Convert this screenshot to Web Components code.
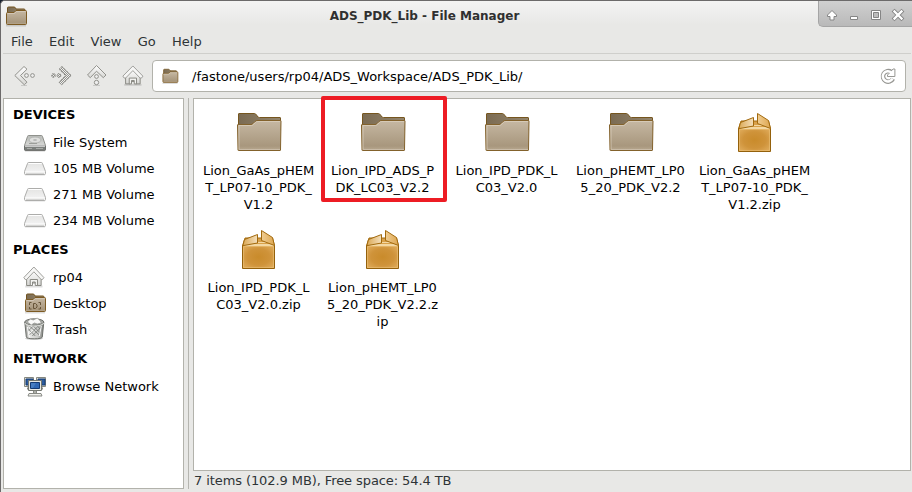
<!DOCTYPE html>
<html lang="en"><head><meta charset="utf-8"><title>ADS_PDK_Lib - File Manager</title>
<style>html,body{margin:0;width:912px;height:492px;overflow:hidden;background:#16202f}</style></head>
<body><file-manager></file-manager>
<script>
const folderDefs = `<defs><linearGradient id="f" x2="0" y2="1"><stop stop-color="#c6b8a3"/><stop offset=".85" stop-color="#a8977d"/><stop offset="1" stop-color="#b9aa92"/></linearGradient><linearGradient id="b" x2="1" y2="0"><stop stop-color="#7b6b52"/><stop offset="1" stop-color="#94856c"/></linearGradient></defs>`;
const smallFolder = extra => `<svg width="24" height="24" viewBox="0 0 24 24">${folderDefs}<path d="M2 21.5h20" stroke="#0002" stroke-width="2"/><path d="M3.5 10V4q0-1 1-1h5.500q1 0 1.500 1l.5 1h8q1 0 1 1v6h-17.500z" fill="url(#b)" stroke="#72531f"/><path d="M2.500 9.500q0-1 1-1h6.500l2-2h9.500q1 0 1 1v12q0 1-1 1h-18q-1 0-1-1z" fill="url(#f)" stroke="#7d5b23"/><path d="M3.500 10q0-.5.5-.5h6.500l2-2h9" fill="none" stroke="#d9cfc0" stroke-opacity=".7"/>${extra||''}</svg>`;
const volume = (a,b) => `<svg width="24" height="24" viewBox="0 0 24 24"><defs><linearGradient id="g" x2="0" y2="1"><stop stop-color="${a}"/><stop offset="1" stop-color="${b}"/></linearGradient></defs>`;
const houseShape = `<path d="M3 21.500h19" stroke="#0002" stroke-width="2"/><path d="M4.500 12v8.500h5v-4.500h1.500v2h3v-2h1.500v4.500h5V12L12.500 5z" fill="url(#h)" stroke="#85857f"/><path d="M8.500 20.500v-6h8v6h-2.500v-3.500h-3v3.500z" fill="#f3f3f1" stroke="#85857f"/><path d="M1.500 12.500L12.500 2l11 10.500-1.500 2h-1.500l-8-7.700-8 7.700H3z" fill="#f6f6f5" stroke="#9b9b97"/>`;
const grey = `<defs><linearGradient id="h" x2="0" y2="1"><stop stop-color="#fff"/><stop offset="1" stop-color="#d5d5d2"/></linearGradient></defs>`;
const icons = {
 app: smallFolder(),
 place: `<svg width="18" height="18" viewBox="0 0 24 24">${smallFolder().replace(/^<svg[^>]*>|<\/svg>$/g,'')}</svg>`,
 desktop: smallFolder('<path d="M6.500 14v-2.500h2M15.500 11.500h2v2.500M6.500 16v2h2M15.500 18h2v-2" fill="none" stroke="#675438"/><path d="M10.500 12.500h2l1.500 1.500v2l-1.500 1.500h-2z" fill="none" stroke="#675438"/>'),
 folder: `<svg width="48" height="48" viewBox="0 0 48 48">${folderDefs}<defs><filter id="s"><feGaussianBlur stdDeviation="1"/></filter></defs><path d="M3 43.200h43" stroke="#0008" stroke-width="2" filter="url(#s)"/><path d="M3.500 22V6q0-.5.5-.5h15.500q1 0 2 1.500l1.500 2q.7.500 1.500.500H45q.5 0 .5.500v12z" fill="url(#b)" stroke="#76561f"/><path d="M2.500 17q0-.5.5-.5h13q1 0 2-1l2-2q1-1 2-1H45.500q.5 0 .5.500L45.500 42q0 .5-.5.500H3.500q-.5 0-.5-.500z" fill="url(#f)" stroke="#83622c"/><path d="M4 41.500V17.500h12.500q1 0 2-1l2-2q1-1 2-1H45" fill="none" stroke="#ddd2c1" stroke-opacity=".7"/><path d="M4 41.500h41" stroke="#c9bba7"/></svg>`,
 zip: `<svg width="48" height="48" viewBox="0 0 48 48"><defs><radialGradient id="z" cy=".5" r=".65"><stop stop-color="#c98b2b"/><stop offset=".55" stop-color="#cf933a"/><stop offset="1" stop-color="#e0ac5c"/></radialGradient><linearGradient id="l"><stop stop-color="#dba956"/><stop offset="1" stop-color="#f4dfbb"/></linearGradient><linearGradient id="r"><stop stop-color="#f0cd92"/><stop offset="1" stop-color="#dda650"/></linearGradient><filter id="s"><feGaussianBlur stdDeviation="1"/></filter></defs><path d="M7 44.200h33" stroke="#0008" stroke-width="2" filter="url(#s)"/><path d="M10 13h27.500l2 8h-32z" fill="#d9a14a" stroke="#a26a0e"/><path d="M15 17.500h20M12 19.500h25" stroke="#f3d8a3"/><path d="M7.500 20.500h32v23h-32z" fill="url(#z)" stroke="#94610c"/><path d="M8 20.500h31" stroke="#f3d8a3"/><path d="M8.500 42.500v-21h30v21z" fill="none" stroke="#ecc27a" stroke-opacity=".55"/><path d="M9.500 14.500L22.500 9.500v8.500L7.800 20.700z" fill="url(#l)" stroke="#a26a0e"/><path d="M26.500 5.500L37.500 12.500l2 8-13-5z" fill="url(#r)" stroke="#a26a0e"/></svg>`,
 back: `<svg width="24" height="24" viewBox="0 0 24 24">${grey}<path d="M8 21.500h6" stroke="#0002"/><path d="M11 2.500l3 2.700L7.500 11.500l6.500 6.700-2.700 2.600L1.800 11.500z" fill="url(#h)" stroke="#92928d"/><circle cx="13.500" cy="11.500" r="1.900" fill="#eee" stroke="#92928d"/><circle cx="19.500" cy="11.500" r="1.900" fill="#eee" stroke="#92928d"/></svg>`,
 fwd: `<svg width="24" height="24" viewBox="0 0 24 24"><defs><pattern id="p" width="2" height="2" patternUnits="userSpaceOnUse"><path d="M0 0h2v2H0z" fill="#efefed"/><path d="M0 0h1v1H0zM1 1h1v1H1z" fill="#92928e"/></pattern></defs><path d="M13 2.500l-3 2.700 6.500 6.300-6.500 6.700 2.700 2.600 9.500-9.300z" fill="url(#p)" stroke="#84847f" stroke-dasharray="1.500 .7"/><circle cx="4.500" cy="11.500" r="1.900" fill="url(#p)" stroke="#84847f" stroke-dasharray="1.500 .7"/><circle cx="10" cy="11.500" r="1.900" fill="url(#p)" stroke="#84847f" stroke-dasharray="1.500 .7"/></svg>`,
 up: `<svg width="24" height="24" viewBox="0 0 24 24">${grey}<path d="M2.500 11L11.500 1.500l9.500 9.500-2.700 2.700-6.800-6.500L5.300 13.700z" fill="url(#h)" stroke="#92928d"/><circle cx="11.500" cy="12.500" r="1.900" fill="#eee" stroke="#92928d"/><circle cx="11.500" cy="18.500" r="2.200" fill="#eee" stroke="#92928d"/><path d="M8 21.500h7" stroke="#0002"/></svg>`,
 home: `<svg width="24" height="24" viewBox="0 0 24 24">${grey}<g transform="translate(.5 0) scale(.91 .97)">${houseShape}</g></svg>`,
 user: `<svg width="24" height="24" viewBox="0 0 24 24">${grey}<g transform="translate(-.5 0) scale(.91 1)">${houseShape}</g></svg>`,
 disk: volume('#b9bbb8','#e5e6e4')+`<path d="M2 20.500h20" stroke="#0003" stroke-width="2"/><path d="M4.500 6.500q.2-1 1-1h13q.8 0 1 1l3 9v4q0 1-1 1h-19q-1 0-1-1v-4z" fill="url(#g)" stroke="#8f918c"/><path d="M1.500 16h21v3.500q0 .8-1 .8h-19q-1 0-1-.8z" fill="#7c807d" stroke="#6d6f6c"/><path d="M2 16.200h20" stroke="#eee"/><ellipse cx="12" cy="10" rx="6" ry="3" fill="#dedfdd" stroke="#b4b6b3"/><ellipse cx="12" cy="10" rx="2" ry=".8" fill="#aaa"/><path d="M6 13.500h8" stroke="#9b9d99"/><path d="M4 18.500h5M13 18.500h7" stroke="#aaaca9"/></svg>`,
 vol: volume('#e3e3e2','#f6f6f6')+`<path d="M2 18.500h20" stroke="#0002" stroke-width="2"/><path d="M4.500 7.500q.2-1 1-1h13q.8 0 1 1l3 8v2q0 1-1 1h-19q-1 0-1-1v-2z" fill="url(#g)" stroke="#adadab"/><path d="M2.500 16h19" stroke="#fff"/><path d="M3 17.300h18" stroke="#cfcfcd"/><path d="M5.400 7.500h13.200" stroke="#fff"/></svg>`,
 trash: `<svg width="24" height="24" viewBox="0 0 24 24"><defs><linearGradient id="t"><stop stop-color="#8c8e8a"/><stop offset=".25" stop-color="#e8e8e6"/><stop offset=".7" stop-color="#c8c9c6"/><stop offset="1" stop-color="#787a76"/></linearGradient></defs><ellipse cx="11" cy="21.500" rx="9" ry="1.300" fill="#0003"/><g transform="translate(-.7 0)"><path d="M2.500 5l1.500 15q.3 1.800 8 1.800t8-1.800L21.500 5z" fill="url(#t)" stroke="#6d706b"/><path d="M5 11l8 8M6 8l11 10M10 8l8 8M14 8l4 4M19 10l-9 9M17 8L7 18M12 8l-6 6" stroke="#666a65" stroke-width=".7"/><path d="M5 10l2 10M19 9l-2 10M8 16l3-3" stroke="#fff" stroke-width=".9"/><ellipse cx="12" cy="5" rx="9.500" ry="3.200" fill="#a6a8a4" stroke="#70726e"/><path d="M5 5l3-3 3 1 4-2 3 3 1 2-4 1-3-1-3 2z" fill="#f9f9f8" stroke="#92948f" stroke-width=".7"/><path d="M2.500 6q2 3 9.500 3t9.500-3" fill="none" stroke="#d8dad6" stroke-width="1.200"/></g></svg>`,
 net: `<svg width="24" height="24" viewBox="0 0 24 24"><path d="M1.500 3.500h9v9h-9zM13.500 3.500h9v9h-9z" fill="#e1e2dc" stroke="#85877f"/><path d="M3 5h7v6H3zM15 5h7v6h-7z" fill="#2c5c9e" stroke="#173c72"/><path d="M4 14.500h4M16 14.500h4" stroke="#888a85" stroke-width="2"/><path d="M5.500 6.500h13v10h-13z" fill="#e9eae5" stroke="#73766f"/><path d="M7.500 8.500h9v6h-9z" fill="#3068b4" stroke="#153a72"/><path d="M8 9h5l-3 5H8z" fill="#6f9fd8" opacity=".4"/><path d="M10.500 17h3v2h-3z" fill="#d3d5ce" stroke="#888a85"/><path d="M6 19.500h12l1 2.500H5z" fill="#f0f0ec" stroke="#888a85"/></svg>`,
 reload: `<svg width="20" height="20" viewBox="0 0 20 20"><path d="M15 12.800A5.300 5.300 0 1 1 13.300 6" fill="none" stroke="#979793" stroke-width="4.500"/><path d="M16.900 3v7.500h-7.400v-1.500l2.500-2.500 3-3.500z" fill="#fff" stroke="#979793"/><path d="M14.500 12.600A5.100 5.100 0 1 1 13.300 6.500l1.500 1.500" fill="none" stroke="#fff" stroke-width="2.500"/></svg>`,
 shade: `<svg width="14" height="14" viewBox="0 0 14 14"><path d="M7 2.500L11.500 7v1.500H9v3.500H5V8.500H2.500V7z" fill="#fff" stroke="#858585"/></svg>`,
 min: `<svg width="14" height="14" viewBox="0 0 14 14"><path d="M3.500 8.500h7v3h-7z" fill="#fff" stroke="#858585"/></svg>`,
 max: `<svg width="14" height="14" viewBox="0 0 14 14"><path d="M2.500 2.500h9v9h-9z" fill="#fff" stroke="#858585"/><path d="M4.500 4.500h5v5h-5z" fill="#bdbdbd" stroke="#858585"/></svg>`,
 close: `<svg width="14" height="14" viewBox="0 0 14 14"><path d="M3.500 3.500l7 7M10.500 3.500l-7 7" stroke="#858585" stroke-width="4" stroke-linecap="square"/><path d="M3.500 3.500l7 7M10.500 3.500l-7 7" stroke="#fff" stroke-width="2.300" stroke-linecap="square"/></svg>`
};
function define(name, html) {
  customElements.define(name, class extends HTMLElement {
    constructor(){ super(); this.attachShadow({mode:'open'}); }
    connectedCallback(){ this.shadowRoot.innerHTML = typeof html === 'function' ? html(this) : html; }
  });
}
define('fm-icon', el => `<style>:host{display:block;flex:none}svg{display:block}</style>${icons[el.getAttribute('name')]}`);
define('title-bar', `<style>
:host{display:grid;grid-template-columns:30px 1fr 94px;height:30px;font-weight:bold;font-size:12px;color:#303030;background:linear-gradient(#f4f4f3,#e8e8e6 24px);border-top-left-radius:5px}
.i{padding:3px 0 0 3px}.t{text-align:center;line-height:30px;white-space:nowrap}
.b{height:26px;box-sizing:border-box;background:linear-gradient(#d0d0d0,#b9b9b9);border:solid #a5a5a5;border-width:0 0 1px 1px;border-bottom-left-radius:5px;display:flex;gap:8px;padding:7px 0 0 6px}</style>
<div class="i"><fm-icon name="app"></fm-icon></div><div class="t"><slot></slot></div>
<div class="b"><fm-icon name="shade"></fm-icon><fm-icon name="min"></fm-icon><fm-icon name="max"></fm-icon><fm-icon name="close"></fm-icon></div>`);
define('menu-bar', `<style>:host{display:flex;height:24px;box-sizing:border-box;margin:0 1px 0 2px;padding-left:8px;gap:16.3px;line-height:24px;color:#2e3436;border-bottom:1px solid #cfcfcc}</style><slot></slot>`);
define('tool-bar', `<style>:host{display:flex;height:44px;align-items:center;box-sizing:border-box;padding:0 6px 0 5px}
.n{display:flex;gap:12px;padding:0 7px 0 7px}
.p{flex:1;height:32px;box-sizing:border-box;border:1px solid #b2b2ab;border-radius:4px;background:#fff;display:flex;align-items:center;padding:0 7px 0 8px}
.x{flex:1;padding-left:13px;white-space:nowrap}</style>
<div class="n"><fm-icon name="back"></fm-icon><fm-icon name="fwd"></fm-icon><fm-icon name="up"></fm-icon><fm-icon name="home"></fm-icon></div>
<div class="p"><fm-icon name="place"></fm-icon><div class="x"><slot></slot></div><fm-icon name="reload"></fm-icon></div>`);
define('side-bar', `<style>:host{display:block;width:181px;box-sizing:border-box;border:1px solid #b2b2ab;background:#fff}</style><slot></slot>`);
define('side-heading', `<style>:host{display:block;height:31px;line-height:31px;padding-left:9px;font-weight:bold}</style><slot></slot>`);
define('side-item', el => `<style>:host{display:flex;height:26px;align-items:center;gap:6px;padding-left:19px;white-space:nowrap;box-sizing:border-box;padding-bottom:2px}</style><fm-icon name="${el.getAttribute('icon')}"></fm-icon><span><slot></slot></span>`);
define('file-item', el => `<style>:host{display:flex;flex-direction:column;align-items:center;position:relative;padding-top:9px;box-sizing:border-box}
.l{margin-top:6px;padding-right:1px;line-height:17px;text-align:center;white-space:nowrap}
.m{position:absolute;left:0;top:-3px;width:126px;height:106px;box-sizing:border-box;border:4px solid #ed1c24;border-radius:2px}</style>
<fm-icon name="${el.getAttribute('icon')}"></fm-icon><div class="l"><slot></slot></div>${el.hasAttribute('marked')?'<div class="m"></div>':''}`);
define('file-grid', `<style>:host{display:grid;grid-template-columns:repeat(5,124px);grid-auto-rows:117px;height:373px;box-sizing:border-box;border:1px solid #b2b2ab;background:#fff;padding-left:3px}</style><slot></slot>`);
define('file-manager', `<style>
:host{display:block;width:912px;height:492px;box-sizing:border-box;overflow:hidden;font:13px "DejaVu Sans",sans-serif;color:#000;background:#e8e8e6;border:solid #6c6a6a;border-width:1px 0 0 1px;border-top-left-radius:5px}
title-bar{margin-top:-1px;border-top:1px solid transparent;box-sizing:border-box}
.c{display:flex;height:391px;padding:0 1px 0 2px}
.s{width:4px;margin-right:4px;border-right:1px solid #b5b5b0}
.r{flex:1}.st{line-height:20px;padding-left:1px;color:#2e3436;letter-spacing:-.09px}</style>
<title-bar>ADS_PDK_Lib - File Manager</title-bar>
<menu-bar><span>File</span><span>Edit</span><span>View</span><span>Go</span><span>Help</span></menu-bar>
<tool-bar>/fastone/users/rp04/ADS_Workspace/ADS_PDK_Lib/</tool-bar>
<div class="c"><side-bar><side-heading>DEVICES</side-heading><side-item icon="disk">File System</side-item><side-item icon="vol">105 MB Volume</side-item><side-item icon="vol">271 MB Volume</side-item><side-item icon="vol">234 MB Volume</side-item>
<side-heading>PLACES</side-heading><side-item icon="user">rp04</side-item><side-item icon="desktop">Desktop</side-item><side-item icon="trash">Trash</side-item>
<side-heading>NETWORK</side-heading><side-item icon="net">Browse Network</side-item></side-bar>
<div class="s"></div><div class="r"><file-grid>
<file-item icon="folder">Lion_GaAs_pHEM<br>T_LP07-10_PDK_<br>V1.2</file-item>
<file-item icon="folder" marked>Lion_IPD_ADS_P<br>DK_LC03_V2.2</file-item>
<file-item icon="folder">Lion_IPD_PDK_L<br>C03_V2.0</file-item>
<file-item icon="folder">Lion_pHEMT_LP0<br>5_20_PDK_V2.2</file-item>
<file-item icon="zip">Lion_GaAs_pHEM<br>T_LP07-10_PDK_<br>V1.2.zip</file-item>
<file-item icon="zip">Lion_IPD_PDK_L<br>C03_V2.0.zip</file-item>
<file-item icon="zip">Lion_pHEMT_LP0<br>5_20_PDK_V2.2.z<br>ip</file-item>
</file-grid><div class="st">7 items (102.9 MB), Free space: 54.4 TB</div></div></div>`);
</script></body></html>
